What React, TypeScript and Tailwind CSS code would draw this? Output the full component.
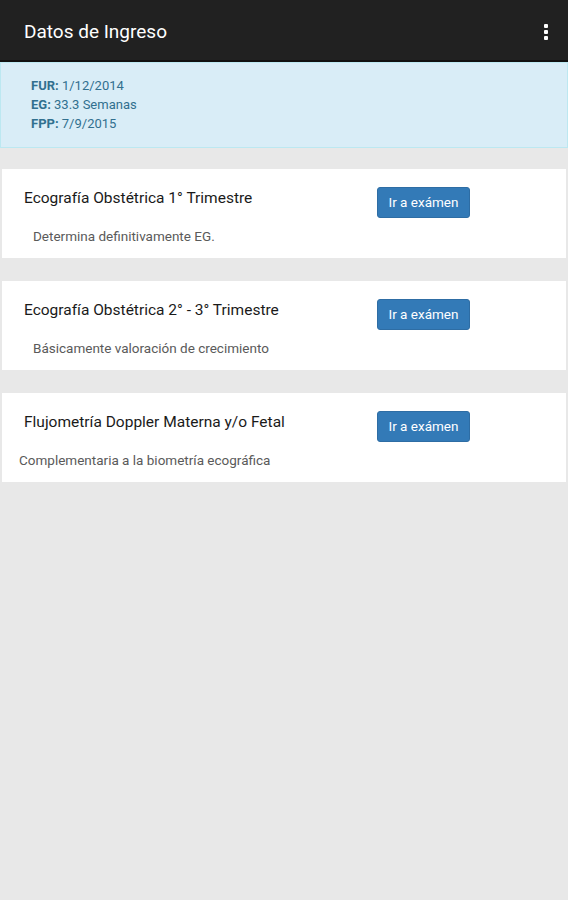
import React from "react";

const items = [
  { title: "Ecografía Obstétrica 1° Trimestre", sub: "Determina definitivamente EG.", subPad: "pl-[31px]" },
  { title: "Ecografía Obstétrica 2° - 3° Trimestre", sub: "Básicamente valoración de crecimiento", subPad: "pl-[31px]" },
  { title: "Flujometría Doppler Materna y/o Fetal", sub: "Complementaria a la biometría ecográfica", subPad: "pl-[17px]" },
];

export default function App() {
  return (
    <div className="w-[568px] h-[900px] bg-[#e8e8e8] flex flex-col" style={{ fontFamily: "Roboto, 'Noto Sans', sans-serif" }}>
      <div className="h-[62px] bg-[#212121] border-b-2 border-[#111] flex items-center justify-between pl-[24px] pr-[20px] pt-[4px] shrink-0">
        <span className="text-white text-[19px]">Datos de Ingreso</span>
        <div className="flex flex-col gap-[2px] items-center">
          <span className="w-[4px] h-[4px] bg-white rounded-[1px]" />
          <span className="w-[4px] h-[4px] bg-white rounded-[1px]" />
          <span className="w-[4px] h-[4px] bg-white rounded-[1px]" />
        </div>
      </div>
      <div className="h-[86px] bg-[#d9edf7] border border-[#bce8f1] pl-[30px] pt-[13px] text-[13px] leading-[19px] text-[#31708f] shrink-0">
        <div><b className="font-bold">FUR:</b> 1/12/2014</div>
        <div><b className="font-bold">EG:</b> 33.3 Semanas</div>
        <div><b className="font-bold">FPP:</b> 7/9/2015</div>
      </div>
      <div className="flex flex-col gap-[23px] pt-[21px] px-[2px]">
        {items.map((it) => (
          <div key={it.title} className="bg-white h-[89px] flex flex-col">
            <div className="flex items-start pt-[18px]">
              <div className="pl-[22px] w-[375px] pt-[1px] text-[15.5px] leading-[20px] text-[#1a1a1a]">{it.title}</div>
              <button className="h-[31px] w-[93px] rounded-[3px] bg-[#337ab7] border border-[#2e6da4] text-white text-[13.5px] leading-none">
                Ir a exámen
              </button>
            </div>
            <div className={`${it.subPad} pt-[9px] text-[13.5px] leading-[18px] text-[#5a5a5a]`}>{it.sub}</div>
          </div>
        ))}
      </div>
    </div>
  );
}
